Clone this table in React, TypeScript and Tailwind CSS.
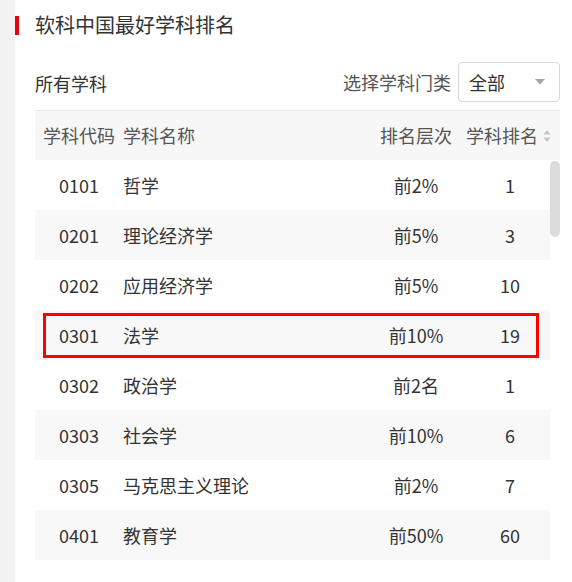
import React from "react";

const rows = [
  { code: "0101", name: "哲学", level: "前2%", rank: "1" },
  { code: "0201", name: "理论经济学", level: "前5%", rank: "3" },
  { code: "0202", name: "应用经济学", level: "前5%", rank: "10" },
  { code: "0301", name: "法学", level: "前10%", rank: "19", marked: true },
  { code: "0302", name: "政治学", level: "前2名", rank: "1" },
  { code: "0303", name: "社会学", level: "前10%", rank: "6" },
  { code: "0305", name: "马克思主义理论", level: "前2%", rank: "7" },
  { code: "0401", name: "教育学", level: "前50%", rank: "60" },
];

function SortIcon() {
  return (
    <svg width="8" height="14" viewBox="0 0 8 14" className="ml-[5px]">
      <path d="M4 1 L7.5 5.5 H0.5 Z" fill="#c4c4c4" />
      <path d="M4 13 L7.5 8.5 H0.5 Z" fill="#c4c4c4" />
    </svg>
  );
}

export default function App() {
  return (
    <div
      className="flex min-h-screen bg-white text-[18px] text-[#333]"
      style={{ fontFamily: '"Noto Sans CJK SC", "Microsoft YaHei", sans-serif' }}
    >
      <div className="w-[15px] shrink-0 bg-[#f2f2f2]" />
      <div className="flex-1">
        <div className="flex items-center gap-4 pt-[15px]">
          <div className="h-[19px] w-[4px] bg-[#e60012]" />
          <h1 className="text-[20px] leading-[20px] text-[#333]">软科中国最好学科排名</h1>
        </div>

        <div className="pl-5 pr-3">
          <div className="mt-[27px] flex h-[40px] items-center justify-between">
            <span className="pt-[2px]">所有学科</span>
            <div className="flex items-center gap-[7px]">
              <span className="text-[#555]">选择学科门类</span>
              <div className="flex h-[40px] w-[102px] items-center justify-between rounded-[4px] border border-[#d9d9d9] pl-[10px] pr-[14px]">
                <span className="text-[#333]">全部</span>
                <svg width="10" height="6" viewBox="0 0 10 6">
                  <path d="M0 0 H10 L5 5.5 Z" fill="#a6a6a6" />
                </svg>
              </div>
            </div>
          </div>

          <div className="mt-[8px] w-[525px]">
            <div className="box-border flex h-[50px] items-center border-t border-[#e8e8e8] bg-[#f7f7f7] text-[#555]">
              <div className="w-[88px] text-center">学科代码</div>
              <div className="flex-1">学科名称</div>
              <div className="w-[88px] text-center">排名层次</div>
              <div className="flex w-[100px] items-center pl-[6px]">
                <span>学科排名</span>
                <SortIcon />
              </div>
            </div>

            <div className="flex h-[400px]">
              <div className="w-[515px]">
                {rows.map((r, i) => (
                  <div
                    key={r.code}
                    className={
                      "relative flex h-[50px] items-center " +
                      (i % 2 === 1 ? "bg-[#f8f8f8]" : "bg-white")
                    }
                  >
                    <div className="w-[88px] text-center">{r.code}</div>
                    <div className="flex-1">{r.name}</div>
                    <div className="w-[88px] text-center">{r.level}</div>
                    <div className="w-[90px] pl-[10px] text-center">{r.rank}</div>
                    {r.marked && (
                      <div className="pointer-events-none absolute bottom-[2px] left-[8px] right-[11px] top-[3px] border-[3px] border-[#ff0000]" />
                    )}
                  </div>
                ))}
              </div>
              <div className="w-[10px] pt-[1px]">
                <div className="h-[76px] w-[10px] rounded-[5px] bg-[#dcdcdc]" />
              </div>
            </div>
          </div>
        </div>
      </div>
    </div>
  );
}
